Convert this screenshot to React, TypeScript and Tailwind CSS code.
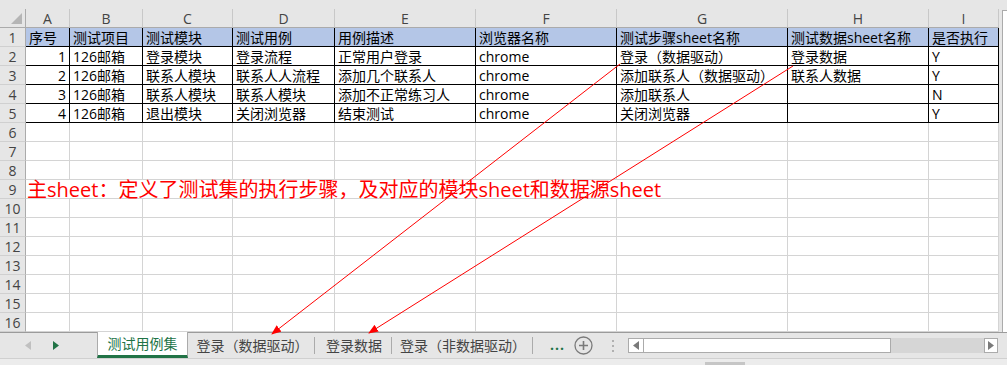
import React from "react";

const cols = "grid-cols-[26px_44px_73px_90px_102px_141px_141px_171px_141px_70px]";
const letters = ["A", "B", "C", "D", "E", "F", "G", "H", "I"];

const headers = ["序号", "测试项目", "测试模块", "测试用例", "用例描述", "浏览器名称", "测试步骤sheet名称", "测试数据sheet名称", "是否执行"];

const rows: (string | number)[][] = [
  [1, "126邮箱", "登录模块", "登录流程", "正常用户登录", "chrome", "登录（数据驱动）", "登录数据", "Y"],
  [2, "126邮箱", "联系人模块", "联系人人流程", "添加几个联系人", "chrome", "添加联系人（数据驱动）", "联系人数据", "Y"],
  [3, "126邮箱", "联系人模块", "联系人模块", "添加不正常练习人", "chrome", "添加联系人", "", "N"],
  [4, "126邮箱", "退出模块", "关闭浏览器", "结束测试", "chrome", "关闭浏览器", "", "Y"],
];

function RowHead({ n }: { n: number }) {
  return (
    <div className="h-[19px] border-r border-b border-r-[#ababab] border-b-[#d0d0d0] bg-[#e6e6e6] text-center text-[14px] leading-[19px] text-[#444]">
      {n}
    </div>
  );
}

function Cell({ children, right, table }: { children?: React.ReactNode; right?: boolean; table?: boolean }) {
  return (
    <div
      className={
        "h-[19px] overflow-visible whitespace-nowrap border-r border-b px-[3px] text-[14px] leading-[19px] text-black " +
        (table ? "border-black " : "border-[#d4d4d4] ") +
        (right ? "text-right" : "text-left")
      }
    >
      {children}
    </div>
  );
}

function Tri({ dir, color }: { dir: "l" | "r"; color: string }) {
  return (
    <svg width="6" height="9" viewBox="0 0 6 9">
      <polygon points={dir === "r" ? "0,0 6,4.5 0,9" : "6,0 0,4.5 6,9"} fill={color} />
    </svg>
  );
}

function TabSep() {
  return <div className="h-[17px] w-px self-center bg-[#ababab]" />;
}

export default function App() {
  return (
    <div className="relative h-[365px] w-[1007px] overflow-hidden bg-[#e6e6e6] font-['Open_Sans','Noto_Sans_CJK_SC',sans-serif]">
      <div className="h-[9px] bg-[#e6e6e6]" />

      <div className="flex">
        <div className="w-[999px] bg-white">
          {/* column letters */}
          <div className={"grid " + cols}>
            <div className="relative h-[19px] border-r border-b border-[#ababab] bg-[#e6e6e6]">
              <svg className="absolute right-[3px] bottom-[3px]" width="11" height="11" viewBox="0 0 11 11">
                <polygon points="11,0 11,11 0,11" fill="#b5b5b5" />
              </svg>
            </div>
            {letters.map((l) => (
              <div
                key={l}
                className="h-[19px] border-r border-b border-r-[#c8c8c8] border-b-[#ababab] bg-[#e6e6e6] text-center text-[14px] leading-[19px] text-[#444]"
              >
                {l}
              </div>
            ))}
          </div>

          {/* header row */}
          <div className={"grid " + cols}>
            <RowHead n={1} />
            {headers.map((h) => (
              <div
                key={h}
                className="h-[19px] whitespace-nowrap border-r border-b border-black bg-[#b4c6e7] px-[3px] text-[14px] leading-[19px] text-black"
              >
                {h}
              </div>
            ))}
          </div>

          {rows.map((r, i) => (
            <div key={i} className={"grid " + cols}>
              <RowHead n={i + 2} />
              {r.map((v, j) => (
                <Cell key={j} table right={j === 0}>
                  {v}
                </Cell>
              ))}
            </div>
          ))}

          {[6, 7, 8].map((n) => (
            <div key={n} className={"grid " + cols}>
              <RowHead n={n} />
              {letters.map((l) => (
                <Cell key={l} />
              ))}
            </div>
          ))}

          {/* note row */}
          <div className={"grid " + cols}>
            <RowHead n={9} />
            <div className="col-span-7 h-[19px] overflow-visible whitespace-nowrap border-r border-b border-[#d4d4d4] pl-[1px] text-[20px] leading-[19px] text-[#ff0000]">
              主sheet：定义了测试集的执行步骤，及对应的模块sheet和数据源sheet
            </div>
            <Cell />
            <Cell />
          </div>

          {[10, 11, 12, 13, 14, 15, 16].map((n) => (
            <div key={n} className={"grid " + cols}>
              <RowHead n={n} />
              {letters.map((l) => (
                <Cell key={l} />
              ))}
            </div>
          ))}
        </div>

        {/* vertical scrollbar */}
        <div className="ml-[3px] mt-[1px] h-[322px] w-[5px] border-l border-t border-[#ababab] bg-white" />
      </div>

      {/* sheet tabs */}
      <div className="flex h-[26px] items-stretch border-t border-[#9b9b9b] text-[14px] text-[#444]">
        <div className="flex w-[97px] items-center">
          <div className="ml-[25px]">
            <Tri dir="l" color="#c0c0c0" />
          </div>
          <div className="ml-[22px]">
            <Tri dir="r" color="#217346" />
          </div>
        </div>
        <div className="-mt-px flex w-[91px] items-center justify-center border-x border-b-[3px] border-x-[#ababab] border-b-[#217346] bg-white text-[#217346]">
          测试用例集
        </div>
        <div className="flex w-[126px] items-center justify-center pl-[3px]">登录（数据驱动）</div>
        <TabSep />
        <div className="flex w-[76px] items-center justify-center pl-[2px]">登录数据</div>
        <TabSep />
        <div className="flex w-[140px] items-center justify-center pl-[2px]">登录（非数据驱动）</div>
        <TabSep />
        <div className="ml-[17px] flex items-center pb-[2px] text-[14px] font-bold tracking-[1px] text-[#217346]">...</div>
        <div className="ml-[9px] flex items-center">
          <svg width="19" height="19" viewBox="0 0 19 19">
            <circle cx="9.5" cy="9.5" r="8.5" fill="none" stroke="#7a7a7a" strokeWidth="1.3" />
            <path d="M9.5 5v9M5 9.5h9" stroke="#7a7a7a" strokeWidth="1.6" />
          </svg>
        </div>
        <div className="ml-[19px] flex flex-col justify-center gap-[3px]">
          <div className="h-[2px] w-[2px] bg-[#b0b0b0]" />
          <div className="h-[2px] w-[2px] bg-[#b0b0b0]" />
          <div className="h-[2px] w-[2px] bg-[#b0b0b0]" />
        </div>
        {/* horizontal scrollbar */}
        <div className="ml-[14px] flex h-[15px] self-center">
          <div className="flex w-[16px] items-center justify-center border border-[#ababab] bg-white">
            <Tri dir="l" color="#7a7a7a" />
          </div>
          <div className="w-[247px] border border-l-0 border-[#ababab] bg-white" />
          <div className="w-[93px] bg-[#d6d6d6]" />
          <div className="flex w-[14px] items-center justify-center border border-[#ababab] bg-white">
            <Tri dir="r" color="#7a7a7a" />
          </div>
        </div>
      </div>

      {/* bottom strip */}
      <div className="h-[7px] border-t border-[#d0d0d0] bg-[#ececec] pl-[705px] pt-[3px]">
        <div className="h-[3px] w-[40px] bg-[#c6c6c6]" />
      </div>

      {/* annotation arrows */}
      <svg className="pointer-events-none absolute inset-0" width="1007" height="365">
        <defs>
          <marker id="ah" markerWidth="10" markerHeight="8" refX="9" refY="4" orient="auto" markerUnits="userSpaceOnUse">
            <polygon points="0,0 10,4 0,8" fill="#ff0000" />
          </marker>
        </defs>
        <line x1="620" y1="64" x2="272" y2="334" stroke="#ff0000" strokeWidth="1" markerEnd="url(#ah)" />
        <line x1="793" y1="66" x2="369" y2="333" stroke="#ff0000" strokeWidth="1" markerEnd="url(#ah)" />
      </svg>
    </div>
  );
}
